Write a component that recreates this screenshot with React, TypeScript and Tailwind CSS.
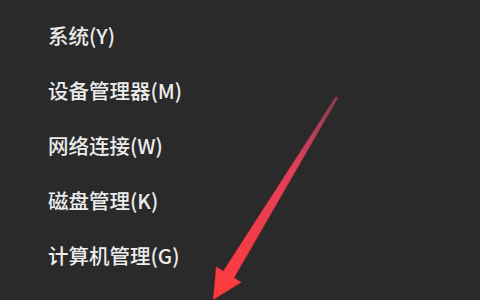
const items = ["系统(Y)", "设备管理器(M)", "网络连接(W)", "磁盘管理(K)", "计算机管理(G)"];

function Arrow() {
  return (
    <svg
      className="absolute inset-0 pointer-events-none"
      width="480"
      height="300"
      viewBox="0 0 480 300"
    >
      <defs>
        <linearGradient id="arrowFill" x1="337" y1="97" x2="213" y2="300" gradientUnits="userSpaceOnUse">
          <stop offset="0" stopColor="#b04a6a" stopOpacity="0.7" />
          <stop offset="0.35" stopColor="#e0405a" />
          <stop offset="1" stopColor="#ff3b3b" />
        </linearGradient>
      </defs>
      <polygon
        points="335.8,96.4 338.2,97.6 234.2,277.8 241.5,282.3 213,300 216,266.5 223.2,271"
        fill="url(#arrowFill)"
        stroke="#8a1f2a"
        strokeOpacity="0.5"
        strokeWidth="1"
        strokeLinejoin="round"
      />
    </svg>
  );
}

export default function App() {
  return (
    <div className="relative w-[480px] h-[300px] overflow-hidden bg-[#2a2a2a]">
      <ul className="flex flex-col pt-[8px] pl-[48px]">
        {items.map((item) => (
          <li
            key={item}
            className="h-[55px] flex items-center text-[20.5px] font-medium text-[#ececec] font-['Noto_Sans_CJK_SC','Noto_Sans',sans-serif]"
          >
            {item}
          </li>
        ))}
      </ul>
      <Arrow />
    </div>
  );
}
